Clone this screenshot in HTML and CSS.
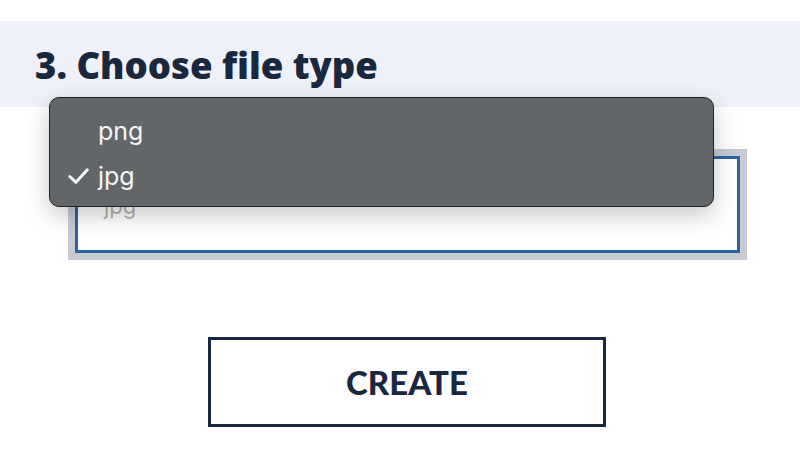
FILE: index.html
```html
<!DOCTYPE html>
<html>
<head>
<meta charset="utf-8">
<link rel="stylesheet" href="styles.css">
</head>
<body>
<div class="page">
  <div class="band">
    <h2 class="title">3. Choose file type</h2>
  </div>
  <div class="field">
    <div class="select">jpg</div>
    <div class="menu">
      <div class="opt"><span class="check"></span>png</div>
      <div class="opt"><span class="check"><svg width="21" height="16" viewBox="0 0 21 16"><polyline points="1.8,8.5 8,14.3 19.3,1.8" fill="none" stroke="#f4f4f4" stroke-width="3" stroke-linecap="round" stroke-linejoin="round"/></svg></span>jpg</div>
    </div>
  </div>
  <div class="actions">
    <button class="create">CREATE</button>
  </div>
</div>
</body>
</html>
```
FILE: styles.css
```css
html, body { margin: 0; padding: 0; background: #fff; }
.page { width: 800px; height: 467px; padding-top: 21px; box-sizing: border-box; position: relative; }
.band { background: #eef1f8; height: 86px; box-sizing: border-box; padding: 20px 0 0 35px; }
.title { margin: 0; font-family: "Open Sans", sans-serif; font-weight: 800; font-size: 36.5px; line-height: 48px; color: #19273f; letter-spacing: 0; }
.field { position: relative; padding: 41px 0 0 68px; }
.select { box-sizing: border-box; border: 3px solid #2d64a3; outline: 7px solid #c6cbd2; margin: 8px 0 0 7px; width: 665px; height: 97px; font-family: Inter, "Open Sans", sans-serif; font-size: 22px; color: #b0b0b0; padding: 34px 0 0 26px; }
.menu { position: absolute; left: 49px; top: -10px; width: 665px; height: 110px; box-sizing: border-box; background: #636668; border: 1px solid #222; border-radius: 10px; box-shadow: 0 8px 24px rgba(0,0,0,0.22); padding-top: 10px; }
.opt { display: flex; align-items: center; height: 45px; font-family: Inter, "Open Sans", sans-serif; font-size: 25px; color: #f4f4f4; }
.check { width: 48px; padding-left: 18px; box-sizing: border-box; display: flex; align-items: center; }
.actions { display: flex; justify-content: center; padding-top: 84px; padding-left: 14px; }
.create { width: 398px; height: 90px; background: #fff; border: 3px solid #19273f; font-family: Lato, sans-serif; font-weight: 900; font-size: 33px; color: #19273f; letter-spacing: 0; padding-top: 0; }
```
